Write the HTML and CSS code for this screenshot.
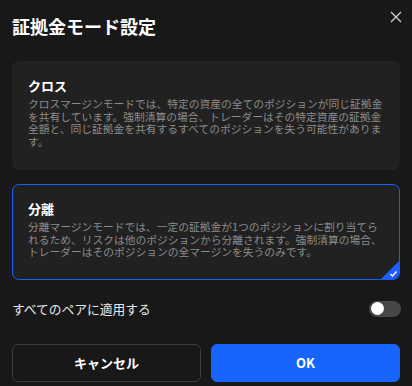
FILE: index.html
```html
<!DOCTYPE html>
<html lang="ja">
<head>
<meta charset="utf-8">
<link rel="stylesheet" href="styles.css">
</head>
<body>
<div class="dialog">
  <div class="header">
    <h1 class="title">証拠金モード設定</h1>
    <button class="close" aria-label="close">
      <svg width="12" height="12" viewBox="0 0 12 12"><path d="M1 1L11 11M11 1L1 11" stroke="#d0d0d0" stroke-width="1.3" fill="none"/></svg>
    </button>
  </div>
  <div class="card">
    <div class="card-title">クロス</div>
    <p class="card-text">クロスマージンモードでは、特定の資産の全てのポジションが同じ証拠金を共有しています。強制清算の場合、トレーダーはその特定資産の証拠金全額と、同じ証拠金を共有するすべてのポジションを失う可能性があります。</p>
  </div>
  <div class="card selected">
    <div class="card-title">分離</div>
    <p class="card-text">分離マージンモードでは、一定の証拠金が1つのポジションに割り当てられるため、リスクは他のポジションから分離されます。強制清算の場合、トレーダーはそのポジションの全マージンを失うのみです。</p>
    <svg class="check" width="18" height="18" viewBox="0 0 18 18"><path d="M18 0L18 18L0 18Z" fill="#1d5cff"/><path d="M9.5 13L11.5 15L15.5 10.5" stroke="#fff" stroke-width="1.4" fill="none"/></svg>
  </div>
  <div class="apply-row">
    <span class="apply-label">すべてのペアに適用する</span>
    <span class="toggle"><span class="knob"></span></span>
  </div>
  <div class="actions">
    <button class="btn btn-cancel">キャンセル</button>
    <button class="btn btn-ok">OK</button>
  </div>
</div>
</body>
</html>
```
FILE: styles.css
```css
html, body {
  margin: 0;
  padding: 0;
  background: #181818;
}
body {
  font-family: "Noto Sans CJK JP", "Noto Sans", sans-serif;
  color: #fff;
  width: 412px;
  height: 386px;
  overflow: hidden;
}
.dialog {
  padding: 0 12px;
}
.header {
  display: flex;
  justify-content: space-between;
  align-items: flex-start;
  height: 61px;
}
.title {
  margin: 13px 0 0 0;
  font-size: 18px;
  line-height: 26px;
  font-weight: 700;
  letter-spacing: 0;
}
.close {
  margin: 10px -3px 0 0;
  padding: 0;
  border: 0;
  background: transparent;
  width: 14px;
  height: 14px;
  display: flex;
  align-items: center;
  justify-content: center;
}
.card {
  position: relative;
  background: #212121;
  border: 1px solid transparent;
  border-radius: 7px;
  padding: 15px 15px 21px 15px;
  overflow: hidden;
}
.card.selected {
  margin-top: 14px;
  border-color: #1d5cff;
  padding-bottom: 20px;
}
.card-title {
  font-size: 13px;
  font-weight: 700;
  line-height: 18px;
  color: #fff;
}
.card-text {
  margin: 3px 0 0 0;
  font-size: 10.75px;
  line-height: 12.5px;
  color: #8c8c8c;
}
.check {
  position: absolute;
  right: 0;
  bottom: 0;
}
.apply-row {
  display: flex;
  justify-content: space-between;
  align-items: center;
  margin-top: 19px;
  height: 20px;
}
.apply-label {
  font-size: 12.75px;
  color: #e8e8e8;
}
.toggle {
  width: 32px;
  height: 16px;
  border-radius: 8px;
  background: #474747;
  display: flex;
  align-items: center;
  padding-left: 1.5px;
  box-sizing: border-box;
  margin-right: -1px;
}
.knob {
  width: 13px;
  height: 13px;
  border-radius: 50%;
  background: #fff;
}
.actions {
  display: flex;
  gap: 10px;
  margin-top: 25px;
}
.btn {
  flex: 1;
  height: 38px;
  border-radius: 6px;
  font-family: "Noto Sans CJK JP", "Noto Sans", sans-serif;
  font-size: 13px;
  font-weight: 700;
  color: #fff;
  cursor: pointer;
}
.btn-cancel {
  background: transparent;
  border: 1px solid #3c3c3c;
}
.btn-ok {
  background: #1764ff;
  border: 1px solid #1764ff;
}
```
